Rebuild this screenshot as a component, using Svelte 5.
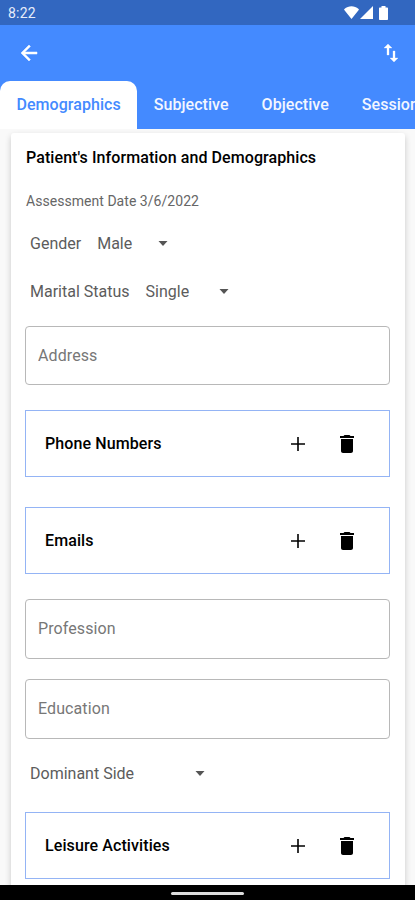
<script lang="ts">
	const tabs = ['Demographics', 'Subjective', 'Objective', 'Session'];

	let active = $state('Demographics');
	let address = $state('');
	let profession = $state('');
	let education = $state('');
</script>

{#snippet caret()}
	<svg class="caret" viewBox="0 0 10 5"><path d="M.5 0h9L5 5z" /></svg>
{/snippet}

{#snippet listBox(title: string)}
	<section class="list-box">
		<h2>{title}</h2>
		<button type="button" aria-label="Add">
			<svg viewBox="0 0 24 24"><path d="M19 12.800h-6.200v6.200h-1.600v-6.200H5v-1.600h6.200V5h1.600v6.200H19z" /></svg>
		</button>
		<button type="button" aria-label="Delete">
			<svg viewBox="0 0 24 24"><path d="M6 19c0 1.1.9 2 2 2h8c1.1 0 2-.9 2-2V7H6v12zM19 4h-3.5l-1-1h-5l-1 1H5v2h14V4z" /></svg>
		</button>
	</section>
{/snippet}

<div class="screen">
	<div class="status-bar">
		<span>8:22</span>
		<div class="status-icons">
			<svg width="15" height="13" viewBox="0 0 15 13"><path d="M7.5 13L.3 3.9C.1 3.600 0 3.200.4 2.900 4.500-.6 10.500-.6 14.600 2.900c.4.3.3.7.1 1z" /></svg>
			<svg width="13" height="13" viewBox="0 0 13 13"><path d="M0 13L13 0v13z" /></svg>
			<svg class="battery" width="9" height="14" viewBox="0 0 9 14"><path d="M2.500 1.500V0h4v1.500H8c.6 0 1 .4 1 1V13c0 .6-.4 1-1 1H1c-.6 0-1-.4-1-1V2.500c0-.6.4-1 1-1z" /></svg>
		</div>
	</div>

	<header>
		<button type="button" aria-label="Back">
			<svg viewBox="0 0 24 24"><path d="M20 11H7.83l5.59-5.59L12 4l-8 8 8 8 1.410-1.410L7.830 13H20v-2z" stroke="currentColor" stroke-width="0.5" /></svg>
		</button>
		<button type="button" aria-label="Sort">
			<svg viewBox="0 0 24 24"><path d="M9 3L5 6.990h3V14h2V6.990h3L9 3zm7 14.010V10h-2v7.010h-3L15 21l4-3.990h-3z" stroke="currentColor" stroke-width="0.3" /></svg>
		</button>
	</header>

	<nav>
		{#each tabs as tab}
			<button type="button" class:active={tab === active} onclick={() => (active = tab)}>{tab}</button>
		{/each}
	</nav>

	<main>
		<div class="card">
			<h1>Patient's Information and Demographics</h1>
			<p class="date">Assessment Date 3/6/2022</p>

			<div class="select-row gender">
				<span class="name">Gender</span>
				<span class="value">Male</span>
				{@render caret()}
			</div>
			<div class="select-row marital">
				<span class="name">Marital Status</span>
				<span class="value">Single</span>
				{@render caret()}
			</div>

			<input class="address" type="text" placeholder="Address" bind:value={address} />
			{@render listBox('Phone Numbers')}
			{@render listBox('Emails')}
			<input class="profession" type="text" placeholder="Profession" bind:value={profession} />
			<input class="education" type="text" placeholder="Education" bind:value={education} />

			<div class="select-row side">
				<span class="name">Dominant Side</span>
				{@render caret()}
			</div>
			{@render listBox('Leisure Activities')}
		</div>
	</main>

	<footer><span></span></footer>
</div>

<style>
	:global(body) {
		overflow: hidden;
	}

	.screen {
		display: flex;
		flex-direction: column;
		height: 900px;
		background: #f9f9f9;
		font-family: Roboto, sans-serif;
	}

	button {
		padding: 0;
		border: none;
		background: none;
		font: inherit;
		color: inherit;
		cursor: pointer;
	}

	svg {
		display: block;
		flex: none;
		fill: currentColor;
	}

	header svg,
	.list-box svg {
		width: 24px;
		height: 24px;
	}

	.status-bar {
		display: flex;
		justify-content: space-between;
		align-items: center;
		height: 25px;
		flex: none;
		padding: 0 27px 0 8px;
		background: #3267c0;
		color: #e6edfa;
		font-size: 14px;
		letter-spacing: 0.2px;
	}

	.status-icons {
		display: flex;
		align-items: center;
		gap: 1px;
		color: #fff;
	}

	.battery {
		margin-left: 5px;
	}

	header {
		display: flex;
		justify-content: space-between;
		align-items: center;
		height: 56px;
		flex: none;
		padding: 0 12px 0 17px;
		background: #448aff;
		color: #fff;
	}

	nav {
		display: flex;
		height: 48px;
		flex: none;
		overflow: hidden;
		background: #448aff;
	}

	nav button {
		flex: none;
		padding: 0 16.5px 2px;
		border-radius: 10px 10px 0 0;
		color: #f2f6ff;
		font-size: 16px;
		font-weight: 500;
		letter-spacing: 0.05px;
	}

	nav .active {
		background: #fff;
		color: #448aff;
	}

	main {
		flex: 1;
		min-height: 0;
		overflow: hidden;
		padding: 4px 10px 0 11px;
	}

	.card {
		display: flex;
		flex-direction: column;
		height: 800px;
		padding: 14px 15px 0 14px;
		box-sizing: border-box;
		border-radius: 3px;
		background: #fff;
		box-shadow: 0 3px 6px rgba(0, 0, 0, 0.2);
	}

	h1,
	h2,
	p {
		margin: 0;
	}

	h1 {
		padding-left: 1px;
		font-size: 16px;
		font-weight: 500;
		line-height: 22px;
		letter-spacing: 0.08px;
		color: #000;
		white-space: nowrap;
	}

	.date {
		margin-top: 22px;
		padding-left: 1px;
		font-size: 14px;
		line-height: 20px;
		letter-spacing: 0.04px;
		color: #666;
	}

	.select-row {
		display: flex;
		align-items: center;
		height: 24px;
		flex: none;
		padding-left: 5px;
		font-size: 16px;
		color: #5c5c5c;
	}

	.gender {
		margin-top: 20px;
	}

	.marital {
		margin-top: 24px;
	}

	.side {
		margin-top: 22px;
	}

	.name {
		margin-right: 16px;
	}

	.gender .value {
		width: 61px;
	}

	.marital .value {
		width: 73px;
	}

	.side .name {
		width: 165px;
		margin-right: 0;
	}

	.caret {
		width: 10px;
		height: 5px;
		color: #555;
	}

	input {
		height: 60px;
		flex: none;
		box-sizing: border-box;
		padding: 0 12px 1px;
		border: 1px solid #b8b8b8;
		border-radius: 4px;
		background: #fff;
		font: 16px Roboto, sans-serif;
		letter-spacing: 0.1px;
	}

	input::placeholder {
		color: #777;
		opacity: 1;
	}

	.address {
		height: 59px;
		margin-top: 23px;
	}

	.profession {
		margin-top: 25px;
	}

	.education {
		margin-top: 20px;
	}

	.list-box {
		display: flex;
		align-items: center;
		height: 67px;
		flex: none;
		box-sizing: border-box;
		padding: 0 30px 0 19px;
		border: 1px solid #94b4f5;
		color: #000;
	}

	.list-box + .list-box {
		margin-top: 30px;
	}

	.address + .list-box {
		margin-top: 25px;
	}

	.side + .list-box {
		margin-top: 27px;
	}

	.list-box h2 {
		flex: 1;
		font-size: 16px;
		font-weight: 500;
		letter-spacing: 0.1px;
	}

	.list-box button + button {
		margin-left: 25px;
	}

	footer {
		display: flex;
		justify-content: center;
		align-items: center;
		height: 15px;
		flex: none;
		background: #000;
	}

	footer span {
		width: 73px;
		height: 3px;
		margin-top: 1px;
		border-radius: 2px;
		background: #ddd;
	}
</style>
